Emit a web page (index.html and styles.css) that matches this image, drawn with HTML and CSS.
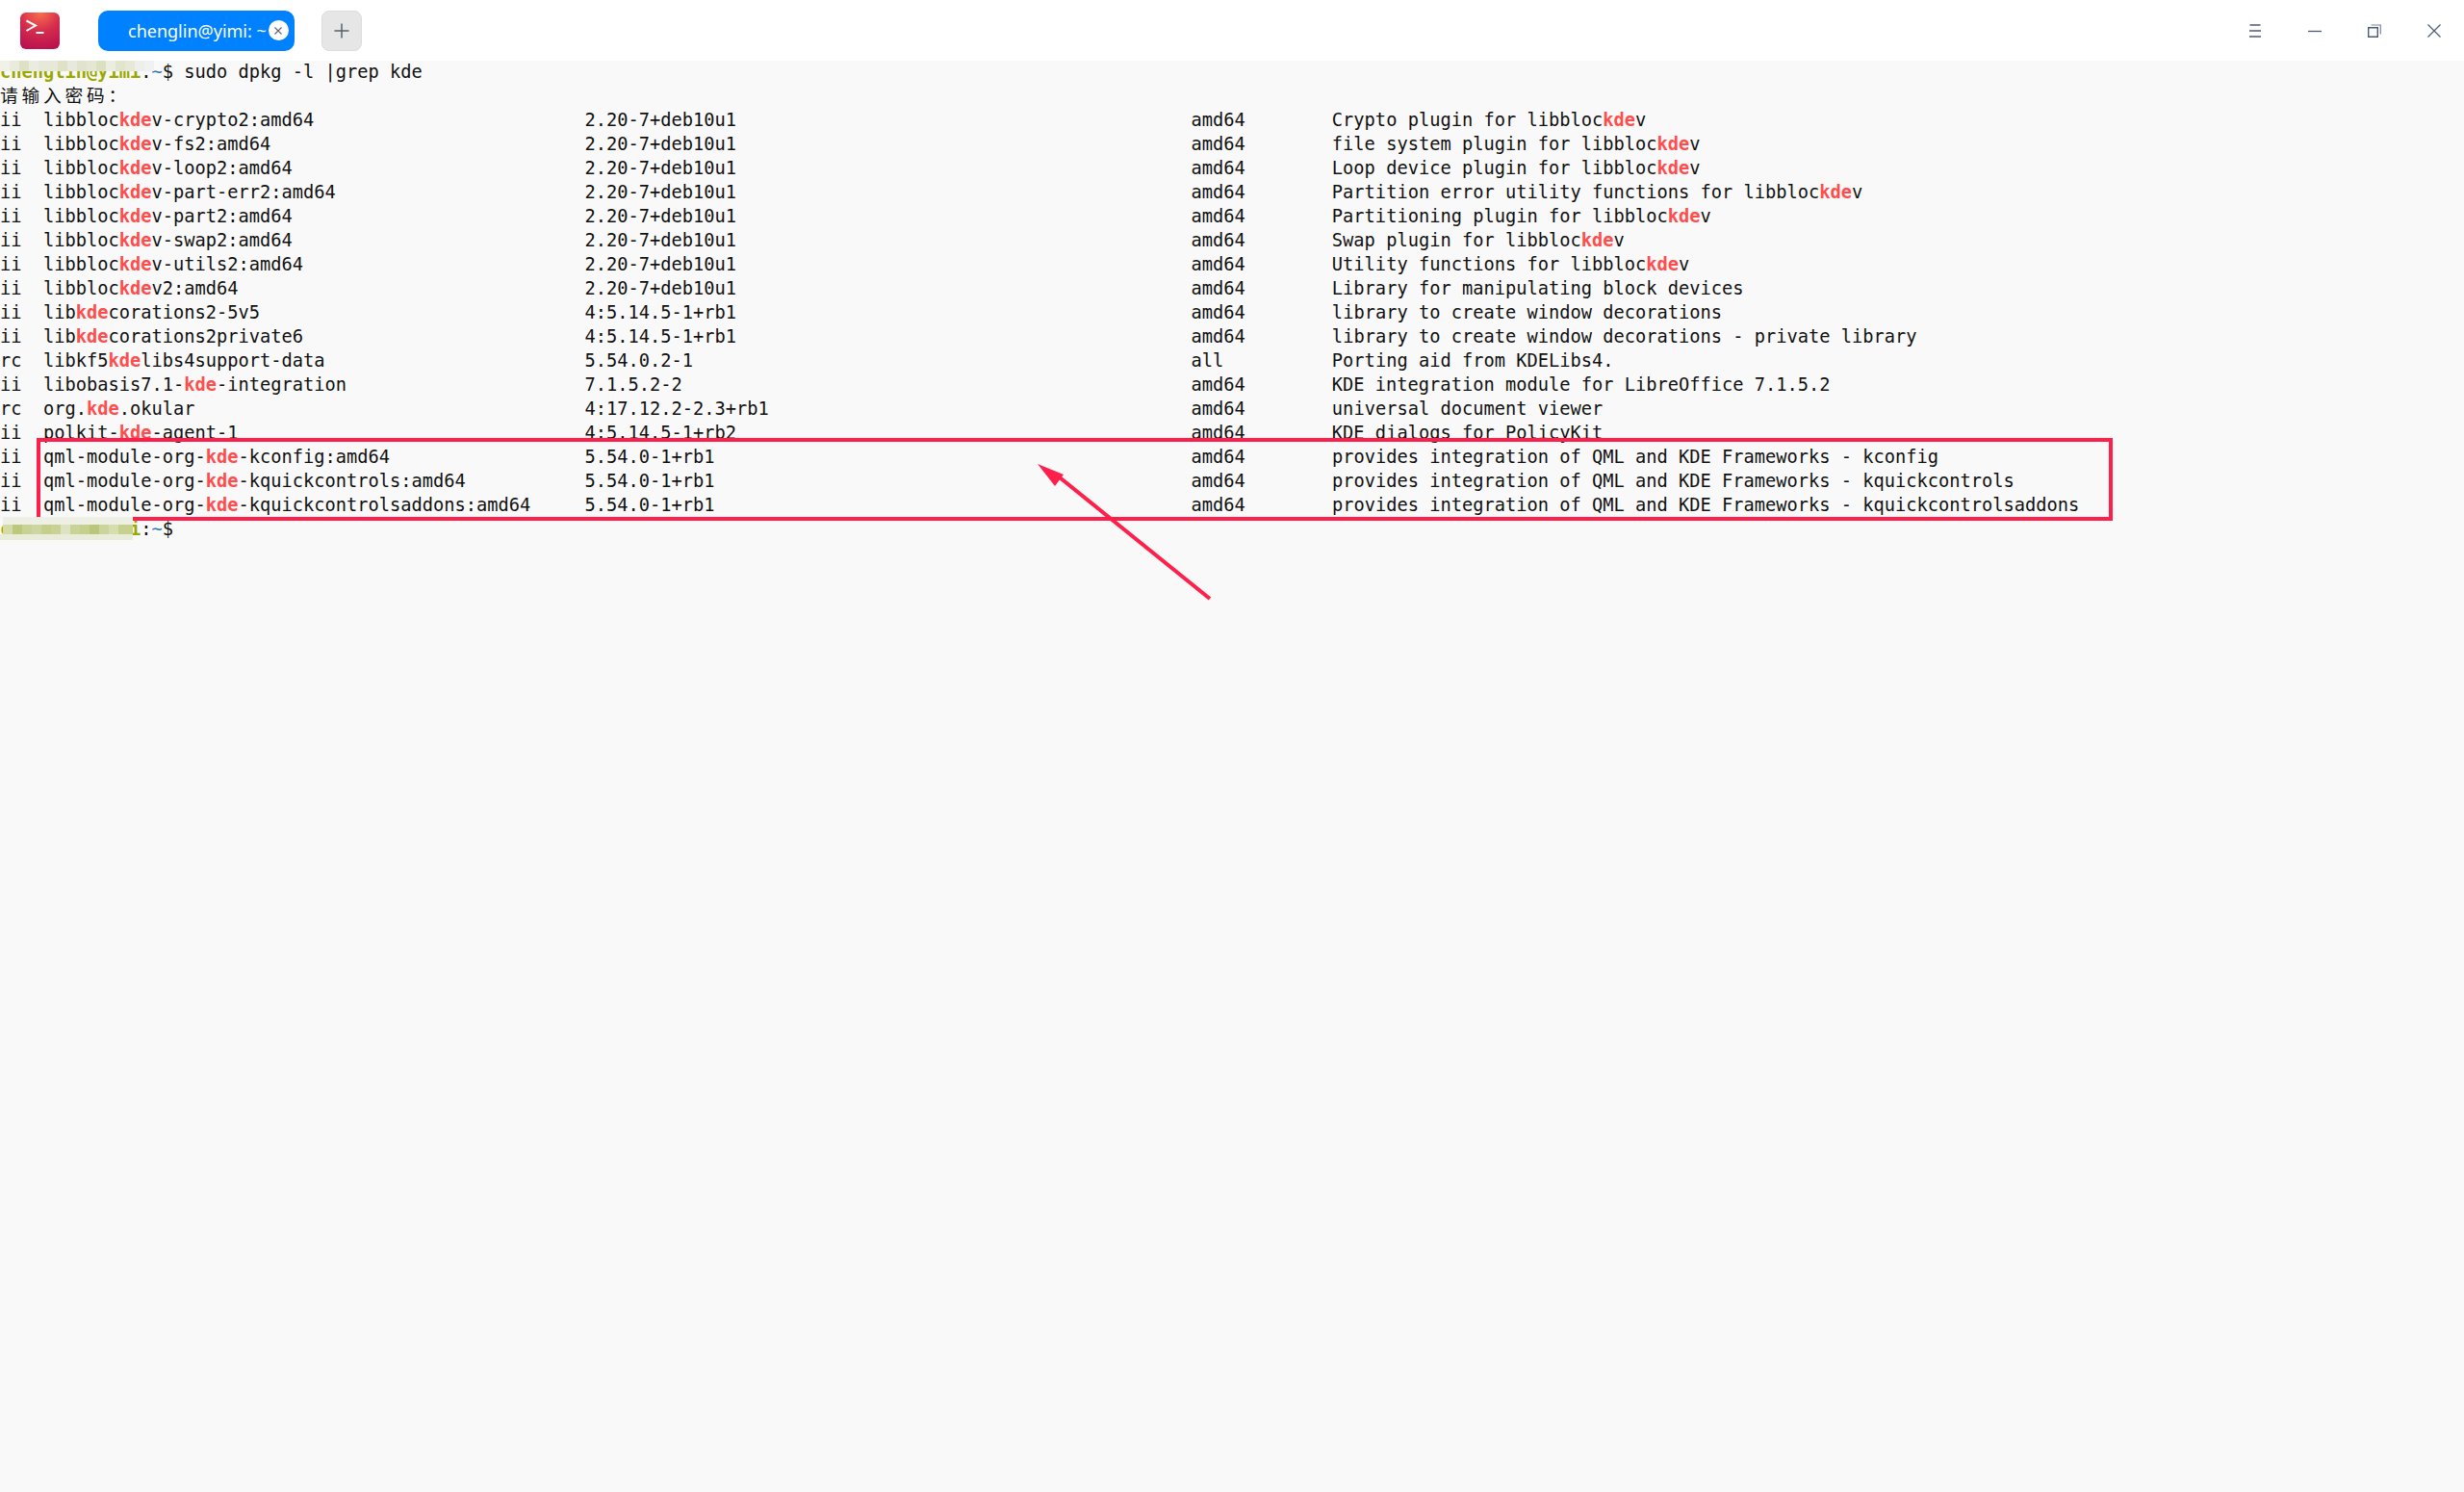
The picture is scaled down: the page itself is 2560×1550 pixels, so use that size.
FILE: index.html
```html
<!DOCTYPE html>
<html lang="en">
<head>
<meta charset="utf-8">
<title>Terminal</title>
<link rel="stylesheet" href="styles.css">
</head>
<body>
<header class="titlebar">
  <div class="app-icon">
    <svg width="41" height="38" viewBox="0 0 41 38"><defs><radialGradient id="g" cx="0.5" cy="0" r="1.05"><stop offset="0" stop-color="#fb6f4c"/><stop offset="0.5" stop-color="#d42c4d"/><stop offset="1" stop-color="#b8104f"/></radialGradient></defs><rect width="41" height="38" rx="6" fill="url(#g)"/><path d="M6.500 8.500L16 13.500L6.500 19" fill="none" stroke="#fff" stroke-width="2"/><path d="M16.500 21H24.500" stroke="#fff" stroke-width="2"/></svg>
  </div>
  <div class="tab">
    <span class="tab-label">chenglin@yimi: ~</span>
    <span class="tab-close"><svg width="10" height="10" viewBox="0 0 10 10"><path d="M1.500 1.500L8.500 8.500M8.500 1.500L1.500 8.500" stroke="#5b6478" stroke-width="1.100"/></svg></span>
  </div>
  <div class="new-tab"><svg width="16" height="16" viewBox="0 0 16 16"><path d="M8 0.500V15.500M0.500 8H15.500" stroke="#556070" stroke-width="1.500"/></svg></div>
  <div class="window-controls">
    <svg class="win-icon" width="14" height="14" viewBox="0 0 14 14"><path d="M1.500 1H12.500M1 7H13M1 13H13" stroke="#4d5a78" stroke-width="1.300"/></svg>
    <svg class="win-icon" width="14" height="14" viewBox="0 0 14 14"><path d="M0 7.500H14" stroke="#4d5a78" stroke-width="1.300"/></svg>
    <svg class="win-icon" width="14" height="14" viewBox="0 0 14 14"><path d="M0.700 3.700H10.300V13.300H0.700Z" fill="none" stroke="#4d5a78" stroke-width="1.400"/><path d="M3.500 1H13.300V10.500" fill="none" stroke="#7d879c" stroke-width="1.200"/></svg>
    <svg class="win-icon" width="14" height="14" viewBox="0 0 14 14"><path d="M0.500 0.500L13.500 13.500M13.500 0.500L0.500 13.500" stroke="#4d5a78" stroke-width="1.200"/></svg>
  </div>
</header>
<main class="terminal">
<div class="output">
<div class="line"><span class="user">chenglin@yimi</span>:<span class="path">~</span>$ sudo dpkg -l |grep kde</div>
<div class="line"><span class="cjk">请输入密码：</span></div>
<div class="line">ii  libbloc<b class="hit">kde</b>v-crypto2:amd64                         2.20-7+deb10u1                                          amd64        Crypto plugin for libbloc<b class="hit">kde</b>v</div>
<div class="line">ii  libbloc<b class="hit">kde</b>v-fs2:amd64                             2.20-7+deb10u1                                          amd64        file system plugin for libbloc<b class="hit">kde</b>v</div>
<div class="line">ii  libbloc<b class="hit">kde</b>v-loop2:amd64                           2.20-7+deb10u1                                          amd64        Loop device plugin for libbloc<b class="hit">kde</b>v</div>
<div class="line">ii  libbloc<b class="hit">kde</b>v-part-err2:amd64                       2.20-7+deb10u1                                          amd64        Partition error utility functions for libbloc<b class="hit">kde</b>v</div>
<div class="line">ii  libbloc<b class="hit">kde</b>v-part2:amd64                           2.20-7+deb10u1                                          amd64        Partitioning plugin for libbloc<b class="hit">kde</b>v</div>
<div class="line">ii  libbloc<b class="hit">kde</b>v-swap2:amd64                           2.20-7+deb10u1                                          amd64        Swap plugin for libbloc<b class="hit">kde</b>v</div>
<div class="line">ii  libbloc<b class="hit">kde</b>v-utils2:amd64                          2.20-7+deb10u1                                          amd64        Utility functions for libbloc<b class="hit">kde</b>v</div>
<div class="line">ii  libbloc<b class="hit">kde</b>v2:amd64                                2.20-7+deb10u1                                          amd64        Library for manipulating block devices</div>
<div class="line">ii  lib<b class="hit">kde</b>corations2-5v5                              4:5.14.5-1+rb1                                          amd64        library to create window decorations</div>
<div class="line">ii  lib<b class="hit">kde</b>corations2private6                          4:5.14.5-1+rb1                                          amd64        library to create window decorations - private library</div>
<div class="line">rc  libkf5<b class="hit">kde</b>libs4support-data                        5.54.0.2-1                                              all          Porting aid from KDELibs4.</div>
<div class="line">ii  libobasis7.1-<b class="hit">kde</b>-integration                      7.1.5.2-2                                               amd64        KDE integration module for LibreOffice 7.1.5.2</div>
<div class="line">rc  org.<b class="hit">kde</b>.okular                                    4:17.12.2-2.3+rb1                                       amd64        universal document viewer</div>
<div class="line">ii  polkit-<b class="hit">kde</b>-agent-1                                4:5.14.5-1+rb2                                          amd64        KDE dialogs for PolicyKit</div>
<div class="line">ii  qml-module-org-<b class="hit">kde</b>-kconfig:amd64                  5.54.0-1+rb1                                            amd64        provides integration of QML and KDE Frameworks - kconfig</div>
<div class="line">ii  qml-module-org-<b class="hit">kde</b>-kquickcontrols:amd64           5.54.0-1+rb1                                            amd64        provides integration of QML and KDE Frameworks - kquickcontrols</div>
<div class="line">ii  qml-module-org-<b class="hit">kde</b>-kquickcontrolsaddons:amd64     5.54.0-1+rb1                                            amd64        provides integration of QML and KDE Frameworks - kquickcontrolsaddons</div>
<div class="line"><span class="user">chenglin@yimi</span>:<span class="path">~</span>$</div>
</div>
<svg class="annotation" width="2560" height="700" viewBox="0 63 2560 700">
  <rect x="40" y="457" width="2153" height="82" fill="none" stroke="#ff1f4b" stroke-width="4"/>
  <path d="M1257 622L1096 492" stroke="#ff1f4b" stroke-width="4"/>
  <path d="M1078 482L1105 493L1096 505Z" fill="#ff1f4b"/>
  <g>
    <rect x="0" y="63" width="10" height="11" fill="#f0f2e8"/>
    <rect x="10" y="63" width="10" height="11" fill="#e9ecdc"/>
    <rect x="20" y="63" width="10" height="11" fill="#dde2c4"/>
    <rect x="30" y="63" width="10" height="11" fill="#eaecdf"/>
    <rect x="40" y="63" width="10" height="11" fill="#e7e9d8"/>
    <rect x="50" y="63" width="10" height="11" fill="#e6e9d8"/>
    <rect x="60" y="63" width="10" height="11" fill="#e0e2c6"/>
    <rect x="70" y="63" width="10" height="11" fill="#e6e9db"/>
    <rect x="80" y="63" width="10" height="11" fill="#e1e4cd"/>
    <rect x="90" y="63" width="10" height="11" fill="#e4e7d4"/>
    <rect x="100" y="63" width="10" height="11" fill="#dbe0be"/>
    <rect x="110" y="63" width="10" height="11" fill="#ebede3"/>
    <rect x="120" y="63" width="10" height="11" fill="#e1e5cc"/>
    <rect x="130" y="63" width="10" height="11" fill="#e6e9d6"/>
    <rect x="140" y="63" width="10" height="11" fill="#eeeeea"/>
    <rect x="150" y="63" width="10" height="11" fill="#f0f2f2"/>
  </g>
  <g>
    <rect x="3" y="537" width="135" height="8" fill="#eef0e6"/>
    <rect x="0" y="555" width="138" height="6" fill="#e9ecd9"/>
    <rect x="3" y="545" width="10" height="10" fill="#d3dba6"/>
    <rect x="13" y="545" width="10" height="10" fill="#bcc97c"/>
    <rect x="23" y="545" width="10" height="10" fill="#c9d295"/>
    <rect x="33" y="545" width="10" height="10" fill="#cdd6a0"/>
    <rect x="43" y="545" width="10" height="10" fill="#c4cf8e"/>
    <rect x="53" y="545" width="10" height="10" fill="#c9d293"/>
    <rect x="63" y="545" width="10" height="10" fill="#dde2c2"/>
    <rect x="73" y="545" width="10" height="10" fill="#c9d396"/>
    <rect x="83" y="545" width="10" height="10" fill="#c5d08f"/>
    <rect x="93" y="545" width="10" height="10" fill="#b9c77c"/>
    <rect x="103" y="545" width="10" height="10" fill="#cbd49b"/>
    <rect x="113" y="545" width="10" height="10" fill="#d6deae"/>
    <rect x="123" y="545" width="15" height="10" fill="#c6d08f"/>
  </g>
</svg>
</main>
</body>
</html>
```
FILE: styles.css
```css
html, body {
  margin: 0;
  padding: 0;
  height: 100%;
}
body {
  display: flex;
  flex-direction: column;
  width: 2560px;
  height: 1550px;
  overflow: hidden;
  background: #f9f9f9;
  font-family: "Noto Sans", sans-serif;
}
.titlebar {
  flex: none;
  display: flex;
  align-items: center;
  height: 63px;
  background: #fff;
}
.app-icon {
  display: flex;
  margin-left: 21px;
}
.tab {
  display: flex;
  align-items: center;
  margin-left: 40px;
  width: 204px;
  height: 42px;
  border-radius: 10px;
  background: #0081ff;
  color: #fff;
  font-size: 18px;
  box-sizing: border-box;
  padding-left: 31px;
}
.tab-label {
  white-space: nowrap;
}
.tab-close {
  display: flex;
  align-items: center;
  justify-content: center;
  width: 21px;
  height: 21px;
  margin-left: 2px;
  border-radius: 50%;
  background: #fff;
}
.new-tab {
  display: flex;
  align-items: center;
  justify-content: center;
  width: 42px;
  height: 42px;
  margin-left: 28px;
  box-sizing: border-box;
  border: 1px solid #dcdcdc;
  border-radius: 8px;
  background: #e6e6e6;
}
.window-controls {
  display: flex;
  align-items: center;
  gap: 48px;
  margin-left: auto;
  margin-right: 24px;
}
.win-icon {
  display: block;
}
.terminal {
  position: relative;
  flex: 1;
  background: #f9f9f9;
}
.output {
  margin-top: -1px;
  font-family: "DejaVu Sans Mono", monospace;
  font-size: 18.7px;
  color: #111;
}
.line {
  height: 25px;
  line-height: 25px;
  white-space: pre;
}
.user {
  color: #9aa800;
  font-weight: bold;
}
.path {
  color: #2a74b8;
}
.hit {
  color: #ff4d4d;
  font-weight: bold;
}
.cjk {
  font-family: "Noto Sans CJK SC", sans-serif;
  letter-spacing: 3.8px;
  line-height: 1;
}
.annotation {
  position: absolute;
  left: 0;
  top: 0;
}
```
